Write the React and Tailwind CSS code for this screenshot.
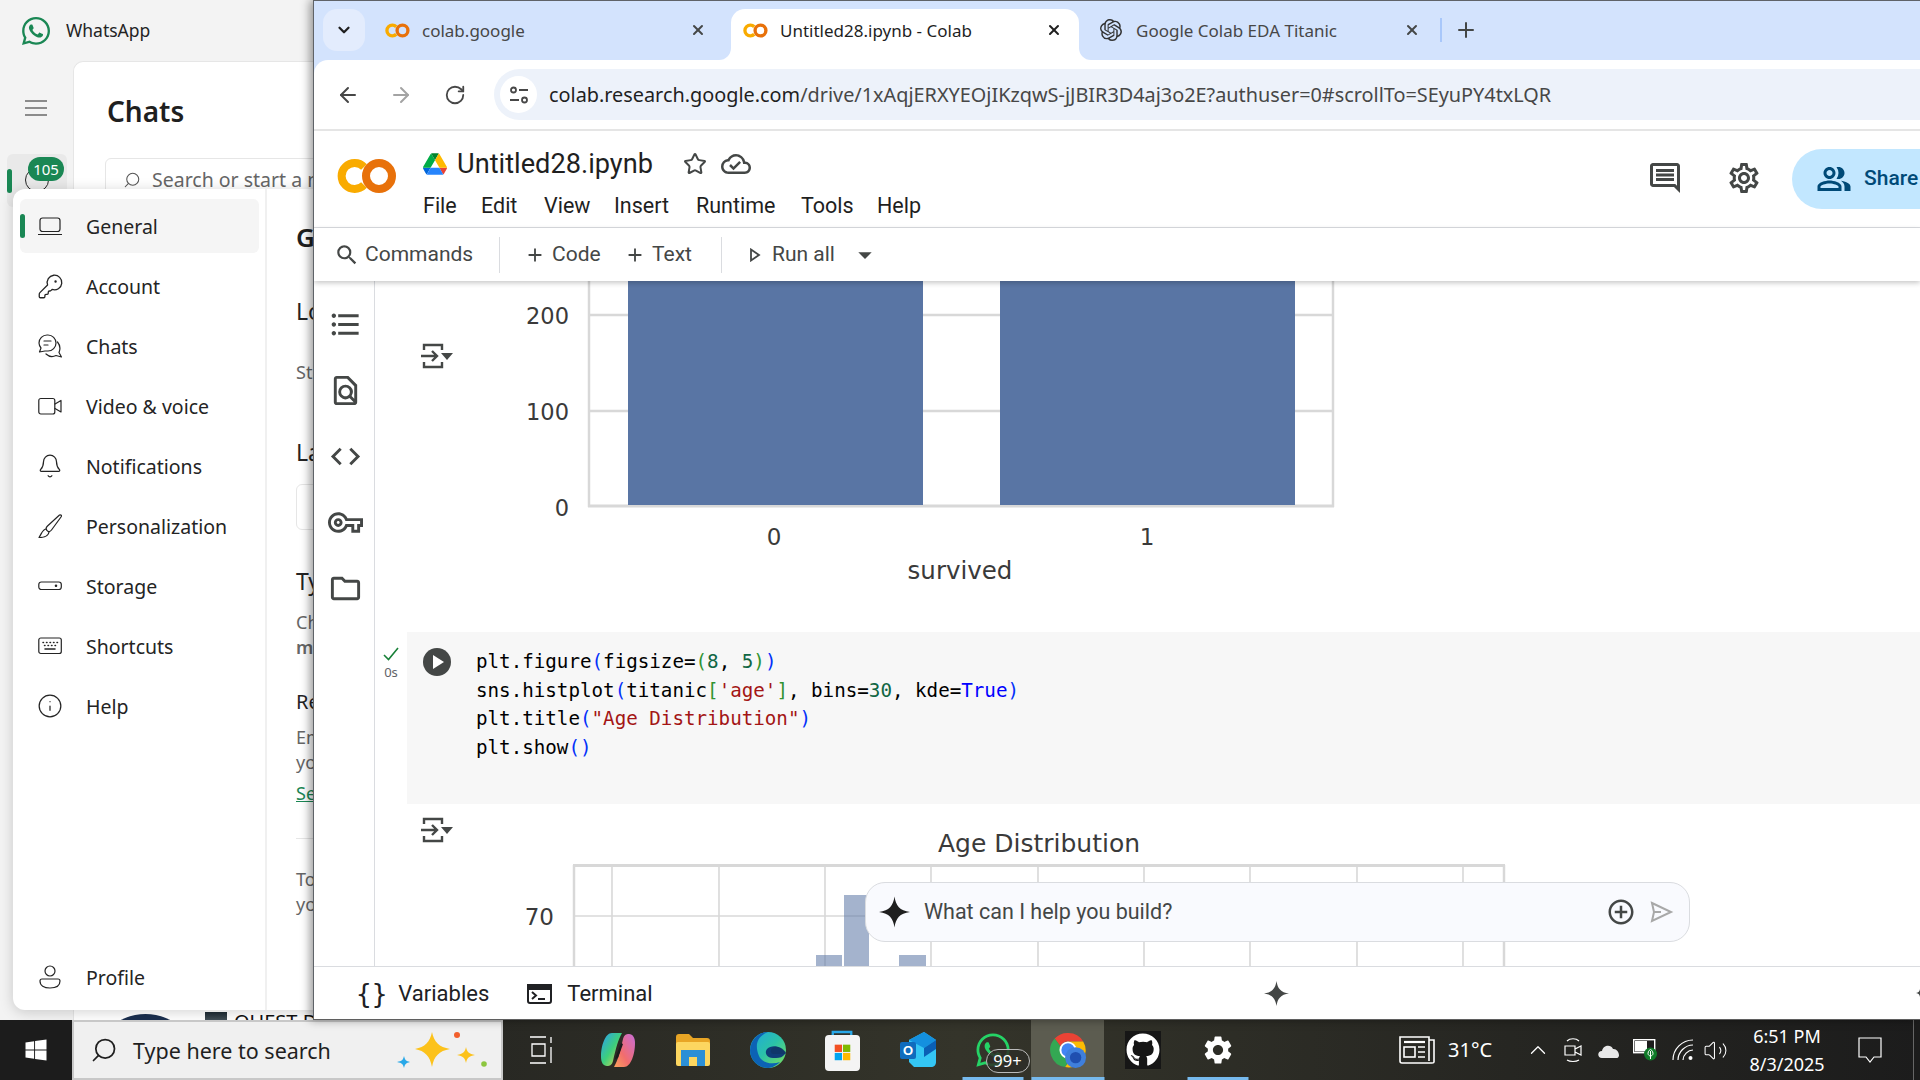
import React from "react";
import { ArrowLeft, ArrowRight, RotateCw, X, Plus, ChevronDown, Star, Search, KeyRound, Bell, Info, ChevronUp, Volume2 } from "lucide-react";
import { FaWhatsapp, FaGithub, FaWindows } from "react-icons/fa";
import { SiOpenai } from "react-icons/si";
import { MdFormatListBulleted, MdOutlineFindInPage, MdCode, MdOutlineVpnKey, MdOutlineFolder, MdOutlineSettings, MdSettings, MdOutlineComment, MdOutlinePeopleAlt, MdSearch, MdAdd, MdPlayArrow, MdArrowDropDown, MdOutlineAddCircleOutline, MdOutlineCloudDone } from "react-icons/md";

const ColabLogo = ({ className }) => (
  <svg viewBox="0 0 60 36" className={className} fill="none">
    <path d="M27 9 A13 13 0 1 0 27 27" stroke="#f9ab00" strokeWidth="8" />
    <circle cx="42" cy="18" r="13" stroke="#e8710a" strokeWidth="8" />
  </svg>
);

const DriveLogo = ({ className }) => (
  <svg viewBox="0 0 87.3 78" className={className}>
    <path d="m6.6 66.85 3.85 6.65c.8 1.4 1.95 2.5 3.3 3.3l13.75-23.8h-27.5c0 1.55.4 3.1 1.2 4.5z" fill="#0066da" />
    <path d="m43.65 25-13.75-23.8c-1.35.8-2.5 1.9-3.3 3.3l-25.4 44a9.06 9.06 0 0 0 -1.2 4.5h27.5z" fill="#00ac47" />
    <path d="m73.55 76.8c1.35-.8 2.5-1.9 3.3-3.3l1.6-2.75 7.65-13.25c.8-1.4 1.2-2.95 1.2-4.5h-27.502l5.852 11.5z" fill="#ea4335" />
    <path d="m43.65 25 13.75-23.8c-1.35-.8-2.9-1.2-4.5-1.2h-18.5c-1.6 0-3.15.45-4.5 1.2z" fill="#00832d" />
    <path d="m59.8 53h-32.3l-13.75 23.8c1.35.8 2.9 1.2 4.5 1.2h50.8c1.6 0 3.15-.45 4.5-1.2z" fill="#2684fc" />
    <path d="m73.4 26.5-12.7-22c-.8-1.4-1.95-2.5-3.3-3.3l-13.75 23.8 16.15 28h27.45c0-1.55-.4-3.1-1.2-4.5z" fill="#ffba00" />
  </svg>
);

const Sparkle = ({ className, color = "#1f1f1f" }) => (
  <svg viewBox="0 0 24 24" className={className}>
    <path d="M12 0 C13 7 16 11 24 12 C16 13 13 17 12 24 C11 17 8 13 0 12 C8 11 11 7 12 0Z" fill={color} />
  </svg>
);

const OutputIcon = () => (
  <svg viewBox="0 0 32 26" className="w-[32px] h-[26px]" fill="none" stroke="#444746" strokeWidth="2.4">
    <path d="M3 7 V2 H21 V7 M3 19 V24 H21 V19" />
    <path d="M0 13 H16 M11 8 L16 13 L11 18" />
    <path d="M20 10 H32 L26 17Z" fill="#444746" stroke="none" />
  </svg>
);

const TerminalIcon = () => (
  <svg viewBox="0 0 25 20" className="w-[25px] h-[20px]" fill="none" stroke="#202124" strokeWidth="2">
    <rect x="1" y="1" width="23" height="18" rx="2" />
    <rect x="1" y="1" width="23" height="4" fill="#202124" />
    <path d="M5 8 L9 11.5 L5 15 M11 15 H18" />
  </svg>
);

const NavSvg = ({ children }) => (
  <svg viewBox="0 0 24 24" className="w-[24px] h-[24px] shrink-0 text-[#242424]" fill="none" stroke="currentColor" strokeWidth="1.2" strokeLinecap="round" strokeLinejoin="round">
    {children}
  </svg>
);

const LaptopI = () => <NavSvg><rect x="2" y="4" width="20" height="13.5" rx="2.5" /><path d="M0.5 20.5 H23.5" /></NavSvg>;
const KeyI = () => <KeyRound size={27} strokeWidth={1.15} className="text-[#242424] shrink-0 -mx-[1.5px]" />;
const ChatsI = () => (
  <NavSvg>
    <path d="M1 9a8 8 0 0 1 8-8h1a8 8 0 0 1 0 16H7l-5.5 1 1.5-4a8 8 0 0 1-2-5z" />
    <path d="M6 7h7M6 11h4" />
    <path d="M19.5 8c2.5 3 3 7 1.5 10.5l2.5 4.5-5.500-1.500c-3 1.500-7 1.200-10-1.500" />
  </NavSvg>
);
const VideoI = () => <NavSvg><rect x="0.8" y="4.500" width="16" height="15.500" rx="2" /><path d="M17 10 L23 6.500 V18 L17 14.500" /></NavSvg>;
const BellI = () => <Bell size={26} strokeWidth={1.15} className="text-[#242424] shrink-0 -mx-px" />;
const BrushI = () => (
  <NavSvg>
    <path d="M21.500 1 C23 0.500 24 1.500 23 3 L13.500 16 C12 18 10 18 9 16.500 C7.500 15 8 13.500 9.500 12 Z" />
    <path d="M8.500 15 C4.500 15 4 19 1 23.500 C6 23.500 10.500 22.500 11 18" />
  </NavSvg>
);
const StorageI = () => <NavSvg><rect x="0.800" y="8" width="22.500" height="7.500" rx="2.500" /><circle cx="18" cy="11.700" r="0.700" fill="currentColor" /></NavSvg>;
const KeyboardI = () => (
  <NavSvg>
    <rect x="0.800" y="4" width="22.500" height="15.500" rx="2" />
    <path d="M5 8.500h.5M8.500 8.500h.5M12 8.500h.5M15.500 8.500h.5M19 8.500h.5M6.500 11.500h.5M10 11.500h.5M13.500 11.500h.5M17 11.500h.5M7 15h10" strokeWidth="1.500" />
  </NavSvg>
);
const InfoI = () => <Info size={26} strokeWidth={1.15} className="text-[#242424] shrink-0 -mx-px" />;
const UserI = () => (
  <NavSvg>
    <circle cx="12" cy="6" r="5" />
    <path d="M2 16a2 2 0 0 1 2-2h16a2 2 0 0 1 2 2c0 4.500-4 7-10 7s-10-2.500-10-7z" />
  </NavSvg>
);

function Tab({ active, width, pr, icon, title }) {
  return (
    <div className={`relative flex items-center h-[51px] pb-[9px] pl-[12px] ${pr} ${width} ${active ? "bg-white rounded-t-[14px] text-[#1f1f1f]" : "text-[#474747]"}`}>
      {active && <span className="absolute -left-[12px] bottom-0 w-[12px] h-[12px] bg-white"><span className="block w-full h-full bg-[#d3e3fd] rounded-br-[12px]" /></span>}
      {active && <span className="absolute -right-[12px] bottom-0 w-[12px] h-[12px] bg-white"><span className="block w-full h-full bg-[#d3e3fd] rounded-bl-[12px]" /></span>}
      <span className="flex items-center justify-center w-[25px] h-[25px] shrink-0">{icon}</span>
      <span className="ml-[12px] mt-[2px] flex-1 text-[17px] leading-[24px] whitespace-nowrap overflow-hidden font-['Noto_Sans',sans-serif]">{title}</span>
      <X size={16} strokeWidth={3} className={active ? "text-[#1f1f1f]" : "text-[#444746]"} />
    </div>
  );
}

const navItems = [
  ["General", LaptopI],
  ["Account", KeyI],
  ["Chats", ChatsI],
  ["Video & voice", VideoI],
  ["Notifications", BellI],
  ["Personalization", BrushI],
  ["Storage", StorageI],
  ["Shortcuts", KeyboardI],
  ["Help", InfoI],
];

function NavRow({ label, Icon, active }) {
  return (
    <div className={`relative flex items-center h-[54px] mb-[6px] ml-[7px] w-[239px] pl-[18px] rounded-[6px] ${active ? "bg-[#f5f5f5]" : ""}`}>
      {active && <span className="absolute left-0 top-[15px] w-[5px] h-[24px] rounded-full bg-[#1a8754]" />}
      <Icon />
      <span className="ml-[24px] mt-[2px] text-[19.5px] leading-[26px] text-[#242424] whitespace-nowrap">{label}</span>
    </div>
  );
}

function WhatsApp() {
  return (
    <div className="relative w-[313px] h-[1020px] overflow-hidden bg-[#f3f3f3] flex flex-col font-['Noto_Sans',sans-serif] shrink-0">
      <div className="h-[61px] flex items-center pl-[20px] shrink-0">
        <FaWhatsapp size={32} className="text-[#1a8754]" />
        <span className="ml-[14px] text-[17.5px] text-[#242424]">WhatsApp</span>
      </div>
      <div className="flex flex-1">
        <div className="w-[73px] shrink-0 flex flex-col pt-[39px] pl-[25px]">
          <svg viewBox="0 0 22 16" className="w-[22px] h-[16px]" fill="none" stroke="#242424" strokeWidth="1.2"><path d="M0 1 H22 M0 8 H22 M0 15 H22" /></svg>
          <div className="relative mt-[38px] -ml-[18px] w-[60px] h-[53px] bg-[#e9e9e9] rounded-[6px]">
            <span className="absolute left-0 top-[15px] w-[5px] h-[24px] rounded-full bg-[#1a8754]" />
            <span className="absolute left-[18px] top-[14px] w-[24px] h-[24px] rounded-full border border-[#242424]" />
            <span className="absolute left-[21px] top-[3px] w-[36px] h-[24px] rounded-full bg-[#1a8754] text-white text-[15px] leading-[24px] text-center">105</span>
          </div>
        </div>
        <div className="flex-1 bg-white rounded-tl-[10px] border-l border-t border-[#e6e6e6] flex flex-col pl-[34px] relative">
          <div className="mt-[29px] h-[40px] text-[28px] leading-[40px] font-semibold text-[#1f1f1f] whitespace-nowrap -ml-px">Chats</div>
          <div className="mt-[27px] -ml-[3px] w-[300px] h-[40px] border border-[#e6e6e6] rounded-[6px] flex items-center pl-[17px] pt-[4px] shrink-0">
            <Search size={18} strokeWidth={1.4} className="text-[#555] -scale-x-100" />
            <span className="ml-[11px] text-[19.5px] text-[#666] whitespace-nowrap">Search or start a new chat</span>
          </div>
          <div className="mt-auto -mb-[3px] -ml-[34px] h-[14px] flex overflow-hidden">
            <span className="block w-[109px] h-[109px] rounded-full bg-[#1a2f4f] shrink-0 mt-[5px] ml-[17px]" />
            <span className="block w-[22px] h-[22px] bg-linear-to-b from-[#1d2a33] to-[#8a959c] shrink-0 mt-[3px] ml-[5px]" />
            <span className="ml-[7px] text-[20px] leading-[22px] mt-[2px] text-[#111] whitespace-nowrap">QUEST DIGITAL</span>
          </div>
        </div>
      </div>

      <div className="absolute left-[13px] top-[189px] w-[400px] h-[821px] bg-white rounded-[12px] shadow-[0_2px_14px_rgba(0,0,0,0.18)] flex">
        <div className="w-[252px] flex flex-col justify-between pt-[10px] shrink-0">
          <div>
            {navItems.map(([label, Icon], i) => <NavRow key={label} label={label} Icon={Icon} active={i === 0} />)}
          </div>
          <NavRow label="Profile" Icon={UserI} />
        </div>
        <div className="flex-1 border-l-2 border-[#f0f0f0] pl-[29px] pt-[29px] flex flex-col whitespace-nowrap overflow-hidden">
          <div className="h-[38px] text-[26px] leading-[38px] font-semibold text-[#1f1f1f]">General</div>
          <div className="mt-[39px] h-[32px] text-[23px] leading-[32px] text-[#242424]">Login</div>
          <div className="mt-[33px] h-[24px] text-[18px] leading-[24px] text-[#666]">Start WhatsApp</div>
          <div className="mt-[52px] h-[32px] text-[23px] leading-[32px] text-[#242424]">Language</div>
          <div className="mt-[16px] h-[46px] w-[200px] border border-[#e6e6e6] rounded-[6px]" />
          <div className="mt-[35px] h-[32px] text-[23px] leading-[32px] text-[#242424]">Typing</div>
          <div className="mt-[13px] h-[24px] text-[18px] leading-[24px] text-[#666]">Change typing</div>
          <div className="mt-[1px] h-[24px] text-[18px] leading-[24px] font-semibold text-[#666]">misspelled</div>
          <div className="mt-[29px] h-[28px] text-[20px] leading-[28px] text-[#242424]">Replace</div>
          <div className="mt-[9px] h-[24px] text-[18px] leading-[24px] text-[#666]">Emoji</div>
          <div className="mt-[1px] h-[24px] text-[18px] leading-[24px] text-[#666]">you type</div>
          <div className="mt-[7px] h-[24px] text-[18px] leading-[24px] text-[#1a8754] underline">See more</div>
          <div className="mt-[33px] h-[1px] w-[200px] bg-[#e6e6e6]" />
          <div className="mt-[28px] h-[24px] text-[18px] leading-[24px] text-[#666]">To log out</div>
          <div className="mt-[1px] h-[24px] text-[18px] leading-[24px] text-[#666]">your device</div>
        </div>
      </div>
    </div>
  );
}

const menus = [["File", "w-[58px]"], ["Edit", "w-[63px]"], ["View", "w-[70px]"], ["Insert", "w-[82px]"], ["Runtime", "w-[105px]"], ["Tools", "w-[76px]"], ["Help", "w-[60px]"]];

const P = ({ c, children }) => <span className={c}>{children}</span>;
const BLUE = "text-[#0431fa]";
const GRN = "text-[#319331]";
const NUM = "text-[#116644]";
const STR = "text-[#a31515]";

function Chart1() {
  const c = "#d8d8d8";
  const tx = { fontFamily: "'DejaVu Sans',sans-serif", fill: "#3a3a3a" };
  return (
    <svg viewBox="475 281 1445 351" className="w-[1445px] h-[351px] block shrink-0">
      <line x1="589" y1="281" x2="589" y2="507" stroke={c} strokeWidth="2.5" />
      <line x1="1333" y1="281" x2="1333" y2="507" stroke={c} strokeWidth="2.5" />
      <line x1="588" y1="506" x2="1334" y2="506" stroke={c} strokeWidth="3" />
      <line x1="589" y1="315" x2="1333" y2="315" stroke={c} strokeWidth="2.5" />
      <line x1="589" y1="411" x2="1333" y2="411" stroke={c} strokeWidth="2.5" />
      <rect x="628" y="281" width="295" height="224" fill="#5975a4" />
      <rect x="1000" y="281" width="295" height="224" fill="#5975a4" />
      <text x="569" y="324" textAnchor="end" fontSize="22.5" style={tx}>200</text>
      <text x="569" y="420" textAnchor="end" fontSize="22.5" style={tx}>100</text>
      <text x="569" y="516" textAnchor="end" fontSize="22.5" style={tx}>0</text>
      <text x="774" y="545" textAnchor="middle" fontSize="23" style={tx}>0</text>
      <text x="1147" y="545" textAnchor="middle" fontSize="23" style={tx}>1</text>
      <text x="960" y="579" textAnchor="middle" fontSize="24.5" style={tx}>survived</text>
    </svg>
  );
}

function Chart2() {
  const c = "#d8d8d8";
  const xs = [612, 719, 825, 931, 1038, 1144, 1250, 1357, 1463];
  const tx = { fontFamily: "'DejaVu Sans',sans-serif", fill: "#3a3a3a" };
  return (
    <svg viewBox="475 804 1445 162" className="w-[1445px] h-[162px] block shrink-0">
      <text x="1039" y="852" textAnchor="middle" fontSize="25" style={tx}>Age Distribution</text>
      {xs.map((x) => <line key={x} x1={x} y1="866" x2={x} y2="966" stroke={c} strokeWidth="1.6" />)}
      <line x1="574" y1="916" x2="1504" y2="916" stroke={c} strokeWidth="1.6" />
      <line x1="573" y1="865.5" x2="1505" y2="865.5" stroke={c} strokeWidth="3" />
      <line x1="574" y1="865" x2="574" y2="966" stroke={c} strokeWidth="2.5" />
      <line x1="1504" y1="865" x2="1504" y2="966" stroke={c} strokeWidth="2.5" />
      <rect x="816" y="955" width="26" height="11" fill="#5975a4" fillOpacity="0.55" />
      <rect x="844" y="895" width="25" height="71" fill="#5975a4" fillOpacity="0.55" />
      <rect x="899" y="955" width="27" height="11" fill="#5975a4" fillOpacity="0.55" />
      <text x="554" y="925" textAnchor="end" fontSize="23" style={tx}>70</text>
    </svg>
  );
}

function Chrome() {
  return (
    <div className="relative z-10 flex-1 h-[1020px] flex flex-col bg-[#d3e3fd] border-l border-t border-[#5f6368] shadow-[-3px_0_9px_rgba(0,0,0,0.4)] font-['Noto_Sans',sans-serif] overflow-hidden">
      <div className="h-[59px] flex items-end pl-[9px] shrink-0">
        <div className="w-[42px] h-[42px] mb-[9px] mr-[8px] rounded-[14px] bg-[#e3ecfd] flex items-center justify-center shrink-0">
          <ChevronDown size={18} strokeWidth={3} className="text-[#1f1f1f]" />
        </div>
        <Tab width="w-[358px]" pr="pr-[25px]" icon={<ColabLogo className="w-[25px] h-[15px]" />} title="colab.google" />
        <Tab active width="w-[348px]" pr="pr-[17px]" icon={<ColabLogo className="w-[25px] h-[15px]" />} title="Untitled28.ipynb - Colab" />
        <div className="w-[361px] h-[51px] flex items-center pb-[9px] pl-[21px] pr-[20px] text-[#474747]">
          <SiOpenai size={22} className="text-[#333]" />
          <span className="ml-[14px] mt-[2px] flex-1 text-[17px] whitespace-nowrap">Google Colab EDA Titanic</span>
          <X size={16} strokeWidth={3} className="text-[#444746]" />
        </div>
        <span className="w-[2px] h-[24px] bg-[#a8c7fa] mb-[18px]" />
        <Plus size={24} strokeWidth={2} className="ml-[12px] mb-[18px] text-[#444746]" />
      </div>

      <div className="h-[71px] bg-white rounded-tl-[14px] border-b-2 border-[#e5e5e5] flex items-start pt-[9px] pl-[22px] shrink-0">
        <ArrowLeft size={24} strokeWidth={2} className="mt-[14px] text-[#474747]" />
        <ArrowRight size={24} strokeWidth={2} className="mt-[14px] ml-[29px] text-[#a3a3a3]" />
        <RotateCw size={22} strokeWidth={2} className="mt-[15px] ml-[31px] text-[#474747]" />
        <div className="ml-[28px] flex-1 h-[51px] bg-[#edf2fa] rounded-l-full flex items-center pl-[6px]">
          <span className="w-[37px] h-[37px] rounded-full bg-white flex items-center justify-center shrink-0">
            <svg viewBox="0 0 20 20" className="w-[20px] h-[20px]" fill="none" stroke="#474747" strokeWidth="1.8"><circle cx="4.500" cy="5" r="2.500" /><path d="M10 5 H19 M1 15 H10" /><circle cx="15.500" cy="15" r="2.500" /></svg>
          </span>
          <span className="ml-[12px] text-[19.85px] text-[#474747] whitespace-nowrap"><span className="text-[#1f1f1f]">colab.research.google.com</span>/drive/1xAqjERXYEOjIKzqwS-jJBIR3D4aj3o2E?authuser=0#scrollTo=SEyuPY4txLQR</span>
        </div>
      </div>

      <div className="h-[97px] bg-white border-b border-[#dadce0] flex font-['Roboto',sans-serif] shrink-0">
        <div className="w-[109px] pl-[23px] pt-[27px] shrink-0">
          <ColabLogo className="w-[60px] h-[36px]" />
        </div>
        <div className="flex flex-col">
          <div className="flex items-center h-[36px] mt-[15px]">
            <DriveLogo className="w-[24px] h-[22px]" />
            <span className="ml-[10px] text-[27.2px] leading-[36px] text-[#1f1f1f] whitespace-nowrap">Untitled28.ipynb</span>
            <Star size={24} strokeWidth={2} className="ml-[30px] text-[#444746]" />
            <MdOutlineCloudDone size={30} className="ml-[14px] text-[#444746]" />
          </div>
          <div className="flex h-[30px] mt-[9px]">
            {menus.map(([m, w]) => <span key={m} className={`${w} text-[21.5px] leading-[30px] text-[#1f1f1f]`}>{m}</span>)}
          </div>
        </div>
        <div className="ml-auto flex items-start pt-[18px]">
          <MdOutlineComment size={36} className="text-[#444746] mt-[11px]" />
          <MdOutlineSettings size={36} className="text-[#444746] mt-[11px] ml-[43px]" />
          <div className="ml-[30px] w-[128px] h-[60px] rounded-l-[30px] bg-[#c2e7ff] flex items-center pl-[24px] text-[#004a77] text-[21px] font-medium overflow-hidden whitespace-nowrap">
            <MdOutlinePeopleAlt size={36} className="shrink-0" />
            <span className="ml-[12px]">Share</span>
          </div>
        </div>
      </div>

      <div className="relative z-20 h-[53px] bg-white shadow-[0_2px_5px_rgba(0,0,0,0.22)] flex items-center text-[#444746] font-['Roboto',sans-serif] text-[21px] shrink-0">
        <MdSearch size={26} className="ml-[20px]" />
        <span className="ml-[5px] w-[134px]">Commands</span>
        <span className="w-px h-[36px] bg-[#dadce0]" />
        <MdAdd size={22} className="ml-[24px]" />
        <span className="ml-[6px] w-[72px]">Code</span>
        <MdAdd size={22} />
        <span className="ml-[6px] w-[69px]">Text</span>
        <span className="w-px h-[36px] bg-[#dadce0]" />
        <svg viewBox="0 0 12 14" className="ml-[27px] w-[12px] h-[14px]" fill="none" stroke="#444746" strokeWidth="1.8"><path d="M2 1.5 L10 7 L2 12.5Z" /></svg>
        <span className="ml-[11px] w-[76px] whitespace-nowrap">Run all</span>
        <MdArrowDropDown size={32} className="ml-[1px]" />
      </div>

      <div className="flex-1 flex bg-white min-h-0">
        <div className="w-[61px] border-r border-[#dadce0] flex flex-col items-center pt-[26px] gap-[31px] text-[#444746] shrink-0">
          <MdFormatListBulleted size={35} className="ml-[2px]" />
          <MdOutlineFindInPage size={35} className="ml-[2px]" />
          <MdCode size={35} className="ml-[2px]" />
          <MdOutlineVpnKey size={35} className="ml-[2px]" />
          <MdOutlineFolder size={35} className="ml-[2px]" />
        </div>
        <div className="relative flex-1 flex flex-col min-w-0 overflow-hidden">
          <div className="flex h-[351px] shrink-0">
            <div className="w-[100px] pl-[46px] pt-[62px] shrink-0"><OutputIcon /></div>
            <Chart1 />
          </div>
          <div className="flex h-[172px] shrink-0">
            <div className="w-[32px] flex flex-col items-center pt-[14px] shrink-0">
              <Check />
              <span className="text-[13px] leading-[16px] mt-[2px] text-[#5f6368]">0s</span>
            </div>
            <div className="flex-1 bg-[#f7f7f7] flex pl-[16px] pt-[16px]">
              <span className="w-[28px] h-[28px] rounded-full bg-[#444746] flex items-center justify-center shrink-0">
                <MdPlayArrow size={24} className="text-white" />
              </span>
              <pre className="ml-[25px] font-['DejaVu_Sans_Mono',monospace] text-[19.2px] leading-[28.6px] text-black">
                <div>plt.figure<P c={BLUE}>(</P>figsize=<P c={GRN}>(</P><P c={NUM}>8</P>, <P c={NUM}>5</P><P c={GRN}>)</P><P c={BLUE}>)</P></div>
                <div>sns.histplot<P c={BLUE}>(</P>titanic<P c={GRN}>[</P><P c={STR}>'age'</P><P c={GRN}>]</P>, bins=<P c={NUM}>30</P>, kde=<P c="text-[#0000ff]">True</P><P c={BLUE}>)</P></div>
                <div>plt.title<P c={BLUE}>(</P><P c={STR}>"Age Distribution"</P><P c={BLUE}>)</P></div>
                <div>plt.show<P c={BLUE}>()</P></div>
              </pre>
            </div>
          </div>
          <div className="flex h-[162px] shrink-0">
            <div className="w-[100px] pl-[46px] pt-[13px] shrink-0"><OutputIcon /></div>
            <Chart2 />
          </div>
          <div className="absolute left-[490px] top-[601px] w-[825px] h-[60px] rounded-[20px] bg-[#f9fafe] border border-[#dadce0] flex items-center pl-[13px] pr-[15px] font-['Roboto',sans-serif]">
            <Sparkle className="w-[31px] h-[32px]" />
            <span className="ml-[14px] flex-1 text-[21.5px] text-[#444746]">What can I help you build?</span>
            <MdOutlineAddCircleOutline size={30} className="text-[#444746]" />
            <svg viewBox="0 0 24 24" className="ml-[12px] w-[26px] h-[24px]" fill="none" stroke="#a8a8a8" strokeWidth="2"><path d="M3 3 L22 12 L3 21 L5 12Z M5 12 H12" /></svg>
          </div>
        </div>
      </div>

      <div className="h-[54px] bg-white border-t border-[#dadce0] border-b border-b-[#5f5f5f] flex items-center pt-[1px] font-['Roboto',sans-serif] text-[#202124] text-[22px] relative shrink-0">
        <span className="ml-[42px] text-[26px] font-['DejaVu_Sans_Mono',monospace] leading-none">{"{}"}</span>
        <span className="ml-[11px] w-[129px]">Variables</span>
        <TerminalIcon />
        <span className="ml-[15px]">Terminal</span>
        <Sparkle className="absolute left-[950px] top-[14px] w-[25px] h-[25px]" color="#444746" />
        <Sparkle className="absolute left-[1602px] top-[22px] w-[8px] h-[8px]" color="#444746" />
      </div>
    </div>
  );
}

const Check = () => (
  <svg viewBox="0 0 18 16" className="w-[18px] h-[16px]" fill="none" stroke="#188038" strokeWidth="1.6"><path d="M2 9 L6.500 13.500 L16 2" /></svg>
);

const Slot = ({ children, active, underline, w = "w-[75px]" }) => (
  <div className={`relative ${w} h-[60px] flex items-center justify-center shrink-0`}>
    {active && <span className="absolute left-[1px] right-[1px] inset-y-0 bg-[#5c5c50]" />}
    {underline && <span className={`absolute bottom-0 left-1/2 -translate-x-1/2 h-[3px] bg-[#76b9ed] ${active ? "w-[73px]" : "w-[61px]"}`} />}
    <span className="relative flex items-center justify-center">{children}</span>
  </div>
);

function Taskbar() {
  return (
    <div className="h-[60px] bg-linear-to-r from-[#1c1c1c] via-[#34342a] to-[#1c1c1c] flex items-center text-white font-['Noto_Sans',sans-serif] shrink-0">
      <div className="w-[72px] h-[60px] bg-[#1c1c1c] flex items-center justify-center shrink-0"><FaWindows size={24} /></div>
      <div className="w-[431px] h-[60px] bg-[#f0f0f0] border-2 border-[#c8c8c8] flex items-center pl-[16px] shrink-0 relative">
        <Search size={28} strokeWidth={1.5} className="text-[#1f1f1f] -scale-x-100" />
        <span className="ml-[15px] mt-[3px] text-[21.5px] text-[#1f1f1f] whitespace-nowrap">Type here to search</span>
        <svg viewBox="0 0 90 36" className="absolute left-[323px] top-[10px] w-[90px] h-[36px]">
          <path d="M35 0 C37 10 42 15 53 17 C42 19 37 24 35 35 C33 24 28 19 18 17 C28 15 33 10 35 0Z" fill="#fcc21b" />
          <path d="M69 15 C70 20 72 22 78 23 C72 24 70 26 69 31 C68 26 66 24 60 23 C66 22 68 20 69 15Z" fill="#fcc21b" />
          <path d="M7 24 C8 28 9 29 13 30 C9 31 8 32 7 36 C6 32 5 31 0 30 C5 29 6 28 7 24Z" fill="#29a8e8" />
          <circle cx="60" cy="3" r="3" fill="#f25f2c" />
          <circle cx="87" cy="32" r="2.800" fill="#8cc63f" />
        </svg>
      </div>

      <Slot w="w-[77px]">
        <svg viewBox="0 0 23 30" className="w-[23px] h-[30px]" fill="none" stroke="#fff" strokeWidth="1.3"><path d="M0 2 H16 M0 28 H16 M2 9 H15 V21 H2Z M21 2 V8 M21 12 V28" /></svg>
      </Slot>
      <Slot>
        <svg viewBox="0 0 34 36" className="w-[34px] h-[36px]">
          <defs>
            <linearGradient id="cop1" x1="0" y1="0" x2="1" y2="1"><stop offset="0" stopColor="#2b9df4" /><stop offset="0.5" stopColor="#3dcf7c" /><stop offset="1" stopColor="#f7d14c" /></linearGradient>
            <linearGradient id="cop2" x1="1" y1="0" x2="0" y2="1"><stop offset="0" stopColor="#c86dd7" /><stop offset="0.6" stopColor="#f26d6d" /><stop offset="1" stopColor="#f9a45c" /></linearGradient>
          </defs>
          <path d="M11 1 H21 C17 8 15 16 12 29 C11 33 9 34 6 34 C2 34 0 30 0 25 C0 14 4 1 11 1Z" fill="url(#cop1)" />
          <path d="M23 35 H13 C17 28 19 20 22 7 C23 3 25 2 28 2 C32 2 34 6 34 11 C34 22 30 35 23 35Z" fill="url(#cop2)" />
          <path d="M20 11 L14 27 L17 26 L22 12Z" fill="#1c1c1c" />
        </svg>
      </Slot>
      <Slot>
        <svg viewBox="0 0 34 32" className="w-[34px] h-[32px]">
          <path d="M0 3 C0 1 1 0 3 0 H13 L17 4 H31 C33 4 34 5 34 7 V12 H0Z" fill="#e8a525" />
          <rect y="8" width="34" height="24" rx="2" fill="#fcd660" />
          <rect x="5" y="16" width="24" height="16" fill="#2b8fd6" />
          <rect x="13" y="23" width="8" height="9" fill="#fcd660" />
        </svg>
      </Slot>
      <Slot>
        <svg viewBox="0 0 36 36" className="w-[36px] h-[36px]">
          <defs>
            <linearGradient id="edg1" x1="0" y1="0" x2="1" y2="1"><stop offset="0" stopColor="#1fa8e0" /><stop offset="0.5" stopColor="#2bc2a8" /><stop offset="1" stopColor="#7ee05a" /></linearGradient>
          </defs>
          <circle cx="18" cy="18" r="18" fill="url(#edg1)" />
          <path d="M0 18 C1 7 9 0 18 0 C8 4 4 12 9 24 C12 31 22 33 30 30 C25 35 20 36 18 36 C8 36 0 28 0 18Z" fill="#0c62b5" />
          <path d="M36 21 C32 14 22 12 17 17 C14 21 17 26 23 26 C27 26 31 26 33 24Z" fill="#0f3d78" />
          <path d="M36 22 H24 C19 22 20 15 26 15 C31 15 35 17 36 22Z" fill="#1c1c1c" opacity="0.15" />
        </svg>
      </Slot>
      <Slot>
        <svg viewBox="0 0 36 42" className="w-[35px] h-[41px]">
          <path d="M8 7 V2 H27 V7" fill="none" stroke="#29a8e8" strokeWidth="2.4" />
          <rect y="5" width="36" height="37" rx="4" fill="#f4f4f4" />
          <rect x="10" y="15" width="7.5" height="7.5" fill="#f25022" />
          <rect x="18.5" y="15" width="7.5" height="7.5" fill="#7fba00" />
          <rect x="10" y="23.5" width="7.5" height="7.5" fill="#00a4ef" />
          <rect x="18.5" y="23.5" width="7.5" height="7.5" fill="#ffb900" />
        </svg>
      </Slot>
      <Slot>
        <svg viewBox="0 0 36 36" className="w-[36px] h-[36px]">
          <path d="M9 8 L24 0 L36 8 V30 C36 33 34 35 31 35 H14 L9 30Z" fill="#34c6f4" />
          <path d="M9 8 L24 0 L36 8 L24 16Z" fill="#1490df" />
          <path d="M24 16 L36 8 V17 L24 25Z" fill="#0a5fb5" />
          <rect y="10" width="16" height="17" rx="2" fill="#0f6cbd" />
          <text x="8" y="23" textAnchor="middle" fontSize="13" fontWeight="700" fill="#fff" style={{ fontFamily: "'Liberation Sans',sans-serif" }}>O</text>
        </svg>
      </Slot>
      <Slot underline>
        <FaWhatsapp size={38} className="text-[#25d366]" />
        <span className="absolute left-[12px] top-[18px] w-[44px] h-[24px] rounded-full bg-[#2e2e28]/85 border border-[#bbb] text-[16.5px] leading-[22px] text-center text-white">99+</span>
      </Slot>
      <Slot active underline>
        <svg viewBox="0 0 40 40" className="w-[38px] h-[38px]">
          <path d="M20 2 A18 18 0 0 1 36 11 L20 11 A9 9 0 0 0 12 16 L6 8 A18 18 0 0 1 20 2Z" fill="#ea4335" />
          <path d="M6 8 A18 18 0 0 0 17 38 L24 27 A9 9 0 0 1 12 16Z" fill="#34a853" />
          <path d="M36 11 A18 18 0 0 1 17 38 L27 24 A9 9 0 0 0 20 11Z" fill="#fbbc04" />
          <circle cx="20" cy="20" r="8" fill="#4285f4" stroke="#fff" strokeWidth="2" />
          <circle cx="28" cy="28" r="11" fill="#3f7fdc" />
          <circle cx="28" cy="28" r="6" fill="#1f4fb0" />
        </svg>
      </Slot>
      <Slot>
        <span className="w-[36px] h-[38px] bg-[#161616] flex items-center justify-center"><FaGithub size={34} className="text-white" /></span>
      </Slot>
      <Slot underline>
        <MdSettings size={34} className="text-white" />
      </Slot>

      <svg viewBox="0 0 36 28" className="ml-[144px] w-[36px] h-[28px] shrink-0" fill="none" stroke="#fff" strokeWidth="1.6">
        <path d="M30 4 H35 V26 C35 27 34 27 33 27 H3 C1.5 27 1 26 1 25 V1 H30 V25" />
        <path d="M5 6 H26" strokeWidth="2.2" />
        <rect x="5" y="11" width="11" height="10" />
        <path d="M19 11 H26 M19 16 H26 M19 21 H26" />
      </svg>
      <span className="ml-[13px] text-[20px] w-[44px] shrink-0 whitespace-nowrap">31°C</span>
      <ChevronUp size={26} strokeWidth={1.2} className="ml-[33px] shrink-0" />
      <svg viewBox="0 0 18 26" className="ml-[13px] w-[18px] h-[26px] shrink-0" fill="none" stroke="#fff" strokeWidth="1.2"><path d="M1 9 H11 V18 H1Z M11 12 L17 9 V18 L11 15 M3 4 C6 1 12 1 15 4 M3 23 C6 25 12 25 15 23" /></svg>
      <svg viewBox="0 0 24 16" className="ml-[15px] w-[24px] h-[16px] shrink-0"><path d="M5 16 C0 16 0 9 5 9 C6 3 14 2 16 7 C21 6 25 16 19 16Z" fill="#e8e8e8" /></svg>
      <svg viewBox="0 0 24 22" className="ml-[12px] w-[24px] h-[22px] shrink-0">
        <rect x="0.700" y="0.700" width="21" height="13" fill="#1c1c1c" stroke="#fff" strokeWidth="1.400" />
        <rect x="2" y="2" width="12" height="10.500" fill="#fff" />
        <circle cx="17.500" cy="15" r="6.500" fill="#0f7a28" />
        <path d="M17.500 20 V12 M15 14.500 C15 11.500 17.500 10.500 17.500 10.500 C17.500 10.500 20 11.500 20 14.500 C20 16 18.500 17 17.500 17 C16.500 17 15 16 15 14.500Z" fill="none" stroke="#fff" strokeWidth="1" />
      </svg>
      <svg viewBox="0 0 22 22" className="ml-[15px] w-[22px] h-[22px] shrink-0" fill="none" stroke="#fff" strokeWidth="1.2"><path d="M1 21 C1 10 10 1 21 1 M6 21 C6 13 13 6 21 6 M11 21 C11 16 16 11 21 11" /><circle cx="18.500" cy="19" r="2" fill="#fff" stroke="none" /></svg>
      <Volume2 size={25} strokeWidth={1} className="ml-[9px] shrink-0" />
      <div className="ml-[14px] w-[90px] flex flex-col items-center text-[18px] leading-[28px] shrink-0 whitespace-nowrap">
        <span>6:51 PM</span>
        <span>8/3/2025</span>
      </div>
      <svg viewBox="0 0 24 26" className="ml-[26px] w-[24px] h-[26px] shrink-0" fill="none" stroke="#fff" strokeWidth="1.2"><path d="M1 1 H23 V20 H16 L12 25 L8 20 H1Z" /></svg>
      <span className="ml-[31px] w-px h-[60px] bg-[#666] shrink-0" />
    </div>
  );
}

export default function App() {
  return (
    <div className="w-[1920px] h-[1080px] overflow-hidden flex flex-col bg-[#f3f3f3]">
      <div className="flex h-[1020px] shrink-0">
        <WhatsApp />
        <Chrome />
      </div>
      <Taskbar />
    </div>
  );
}
